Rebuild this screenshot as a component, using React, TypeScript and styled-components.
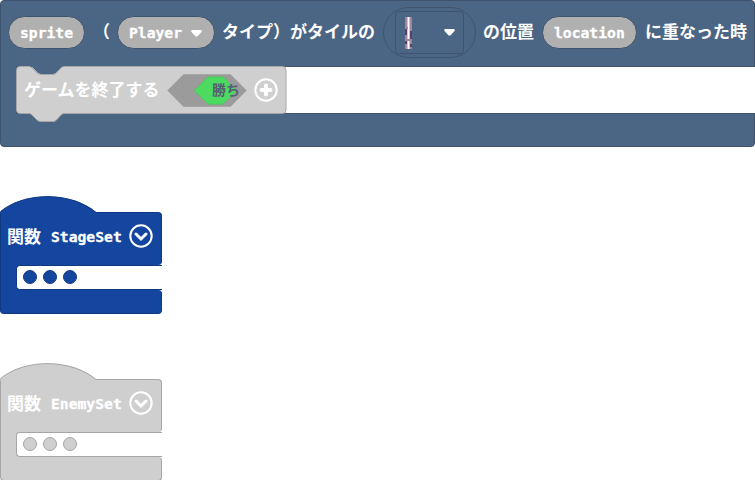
import React from "react";
import styled, { createGlobalStyle } from "styled-components";

const GlobalStyle = createGlobalStyle`
  html, body { margin: 0; padding: 0; background: #fff; overflow: hidden; }
  *, *::before, *::after { box-sizing: border-box; }
`;

const Workspace = styled.main`
  width: 755px;
  height: 480px;
  overflow: hidden;
  display: flex;
  flex-direction: column;
  align-items: flex-start;
`;

type Tone = { fill: string; edge: string };

const slate: Tone = { fill: "#4b6584", edge: "#3e546e" };
const blue: Tone = { fill: "#1446a0", edge: "#103a80" };
const grey: Tone = { fill: "#cfcfcf", edge: "#a6a6a6" };

const EventBlock = styled.section`
  flex: none;
  width: 755px;
  height: 147px;
  display: flex;
  flex-direction: column;
  background: ${slate.fill};
  border: 1px solid ${slate.edge};
  border-radius: 4px;
`;

const EventHeader = styled.header`
  height: 65px;
  padding: 0 0 2px 7px;
  flex: none;
  display: flex;
  align-items: center;
`;

const EventMouth = styled.div`
  height: 48px;
  margin-left: 15px;
  margin-right: -1px;
  background: #fff;
  border: 1px solid ${slate.edge};
  border-right: 0;
`;

const Label = styled.span<{ $width: number; $before?: number; $raise?: number }>`
  position: relative;
  flex: none;
  width: ${(p) => p.$width}px;
  margin-left: ${(p) => p.$before ?? 0}px;
  padding-bottom: ${(p) => p.$raise ?? 0}px;
  font: 700 17px/20px "Noto Sans CJK JP", sans-serif;
  color: #fff;
  white-space: nowrap;
`;

const Mono = styled.span`
  font: 700 14.7px/18px "DejaVu Sans Mono", monospace;
  -webkit-text-stroke: 0.3px #fff;
  color: #fff;
  white-space: nowrap;
`;

const Pill = styled.span<{ $width: number; $before?: number }>`
  flex: none;
  width: ${(p) => p.$width}px;
  height: 33px;
  margin-left: ${(p) => p.$before ?? 0}px;
  padding: 1px 0 0 11px;
  display: flex;
  align-items: center;
  gap: 9px;
  background: #b0b0b0;
  border: 1px solid ${slate.edge};
  border-radius: 17px;
`;

const TileRing = styled.span`
  flex: none;
  width: 93px;
  height: 51px;
  margin-left: 8px;
  display: flex;
  align-items: center;
  justify-content: center;
  border: 1px solid ${slate.edge};
  border-radius: 26px;
`;

const TileField = styled.span`
  width: 69px;
  height: 43px;
  padding: 0 8px 0 9px;
  display: flex;
  align-items: center;
  justify-content: space-between;
  border: 1px solid ${slate.edge};
  border-radius: 4px;
`;

const CallBlock = styled.div`
  position: relative;
  width: 271px;
  height: 48px;
  margin: -1px 0 0 -1px;
  padding-left: 8px;
  display: flex;
  align-items: center;
`;

const CallOutline = styled.svg`
  position: absolute;
  left: 0;
  top: 0;
  overflow: visible;
`;

const Slot = styled.span`
  position: relative;
  flex: none;
  width: 80px;
  height: 33px;
  margin-left: 7px;
  padding: 0 0 2px 45px;
  display: flex;
  align-items: center;
`;

const SlotShape = styled.svg`
  position: absolute;
  left: 0;
  top: 0;
`;

const SlotText = styled.span`
  position: relative;
  font: 700 14px/18px "Noto Sans CJK JP", sans-serif;
  color: #575e75;
  white-space: nowrap;
`;

const RoundButton = styled.svg<{ $before: number }>`
  position: relative;
  flex: none;
  margin-left: ${(p) => p.$before}px;
`;

const FunctionBlock = styled.section<{ $gap: number }>`
  flex: none;
  width: 162px;
  margin-top: ${(p) => p.$gap}px;
  display: flex;
  flex-direction: column;
`;

const Hat = styled.svg`
  display: block;
  position: relative;
  margin-bottom: -2px;
`;

const FunctionHeader = styled.header<{ $tone: Tone }>`
  height: 53px;
  padding: 0 0 6px 6px;
  display: flex;
  align-items: center;
  background: ${(p) => p.$tone.fill};
  border: 1px solid ${(p) => p.$tone.edge};
  border-bottom-width: 0;
  border-radius: 0 4px 4px 0;
`;

const FunctionName = styled(Mono)`
  padding-top: 2px;
`;

const FunctionMouth = styled.div<{ $tone: Tone }>`
  height: 25px;
  padding-left: 16px;
  border-left: 1px solid ${(p) => p.$tone.edge};
  background: linear-gradient(to right, ${(p) => p.$tone.fill} 20px, #fff 20px);
`;

const Dots = styled.div<{ $tone: Tone }>`
  height: 25px;
  margin-left: -1px;
  padding: 0 0 1px 6px;
  display: flex;
  align-items: center;
  gap: 6px;
  background: #fff;
  border: 1px solid ${(p) => p.$tone.edge};
  border-right: 0;
  border-radius: 4px 0 0 4px;
`;

const Dot = styled.i<{ $tone: Tone }>`
  width: 14px;
  height: 14px;
  border-radius: 50%;
  background: ${(p) => p.$tone.fill};
  border: 1px solid ${(p) => p.$tone.edge};
`;

const FunctionFooter = styled.footer<{ $tone: Tone }>`
  height: 24px;
  background: ${(p) => p.$tone.fill};
  border: 1px solid ${(p) => p.$tone.edge};
  border-top-width: 0;
  border-radius: 0 4px 4px 4px;
`;

const Caret = () => (
  <svg width="11" height="7" viewBox="0 0 11 7">
    <path d="M1 0H10Q11 .3 10.7 1.8L6.600 6.200Q5.500 7 4.400 6.200L.3 1.800Q0 .3 1 0Z" fill="#fff" />
  </svg>
);

const TileSprite = () => (
  <svg width="7" height="32" viewBox="0 0 7 32" shapeRendering="crispEdges">
    <path d="M0 0H7V32H0Z" fill="#a4849f" />
    <path d="M0 12H2V18H0ZM5 14H7V22H5ZM0 24H2V27H0ZM5 27H7V30H5Z" fill="#5b406b" />
    <path d="M2 0H5V32H2Z" fill="#d2c0d4" />
    <path d="M3 0H4V32H3Z" fill="#fff" />
    <path d="M0 10H3V12H0ZM1 22H6V24H1Z" fill="#a4849f" />
  </svg>
);

const PlusButton = () => (
  <RoundButton $before={7} width="24" height="24" viewBox="0 0 24 24">
    <circle cx="12" cy="12" r="10.7" fill="none" stroke="#fff" strokeWidth="2" />
    <path d="M12 7.500V16.500M7.500 12H16.500" stroke="#fff" strokeWidth="4" strokeLinecap="round" />
  </RoundButton>
);

const ChevronButton = () => (
  <RoundButton $before={7} width="24" height="24" viewBox="0 0 24 24">
    <circle cx="12" cy="12" r="10.7" fill="none" stroke="#fff" strokeWidth="2" />
    <path d="M7 10L12 15L17 10" fill="none" stroke="#fff" strokeWidth="3" strokeLinecap="round" />
  </RoundButton>
);

const FunctionDefinition = ({ name, tone, gap }: { name: string; tone: Tone; gap: number }) => (
  <FunctionBlock $gap={gap}>
    <Hat width="162" height="18" viewBox="0 0 162 18">
      <path d="M.5 18V15.500C25-4.500 71-4.500 96 16V18Z" fill={tone.fill} />
      <path d="M.5 15.500C25-4.500 71-4.500 96 16.500" fill="none" stroke={tone.edge} />
    </Hat>
    <FunctionHeader $tone={tone}>
      <Label $width={44}>関数</Label>
      <FunctionName>{name}</FunctionName>
      <ChevronButton />
    </FunctionHeader>
    <FunctionMouth $tone={tone}>
      <Dots $tone={tone}>
        <Dot $tone={tone} />
        <Dot $tone={tone} />
        <Dot $tone={tone} />
      </Dots>
    </FunctionMouth>
    <FunctionFooter $tone={tone} />
  </FunctionBlock>
);

export default function App() {
  return (
    <>
      <GlobalStyle />
      <Workspace>
        <EventBlock>
          <EventHeader>
            <Pill $width={77}>
              <Mono>sprite</Mono>
            </Pill>
            <Label $width={17} $before={8} $raise={3}>（</Label>
            <Pill $width={98} $before={7}>
              <Mono>Player</Mono>
              <Caret />
            </Pill>
            <Label $width={153} $before={7} $raise={3}>タイプ）がタイルの</Label>
            <TileRing>
              <TileField>
                <TileSprite />
                <Caret />
              </TileField>
            </TileRing>
            <Label $width={51} $before={7} $raise={3}>の位置</Label>
            <Pill $width={95} $before={8}>
              <Mono>location</Mono>
            </Pill>
            <Label $width={102} $before={8} $raise={3}>に重なった時</Label>
          </EventHeader>
          <EventMouth>
            <CallBlock>
              <CallOutline width="271" height="57" viewBox="0 0 271 57">
                <path d="M15 0L22 7Q23 8 25 8H37Q39 8 40 7L47 0Z" fill={slate.fill} />
                <path
                  d="M4 .5H13Q15 .5 16 2L21 7Q22.500 8.500 25 8.500H37Q39 8.500 40.500 7L45 2Q46.500 .5 48 .5H266.500Q270 .5 270 4V44Q270 47.500 266.500 47.500H48Q46.500 47.500 45 49L40.500 54Q39 55.500 37 55.500H25Q22.500 55.500 21 54L16 49Q15 47.500 13 47.500H4Q.5 47.500 .5 44V4Q.5 .5 4 .5Z"
                  fill={grey.fill}
                  stroke={grey.edge}
                />
              </CallOutline>
              <Label $width={136} $raise={3}>ゲームを終了する</Label>
              <Slot>
                <SlotShape width="80" height="33" viewBox="0 0 80 33">
                  <path d="M.7 16.500L16.500 .5H63.500L79.300 16.500L63.500 32.500H16.500Z" fill="#9b9b9b" stroke="#a6a6a6" />
                  <path d="M27.500 16.500L41 3H56L69.500 16.500L56 30H41Z" fill="#4cdb60" stroke="#46cb58" />
                </SlotShape>
                <SlotText>勝ち</SlotText>
              </Slot>
              <PlusButton />
            </CallBlock>
          </EventMouth>
        </EventBlock>
        <FunctionDefinition name="StageSet" tone={blue} gap={49} />
        <FunctionDefinition name="EnemySet" tone={grey} gap={49} />
      </Workspace>
    </>
  );
}
